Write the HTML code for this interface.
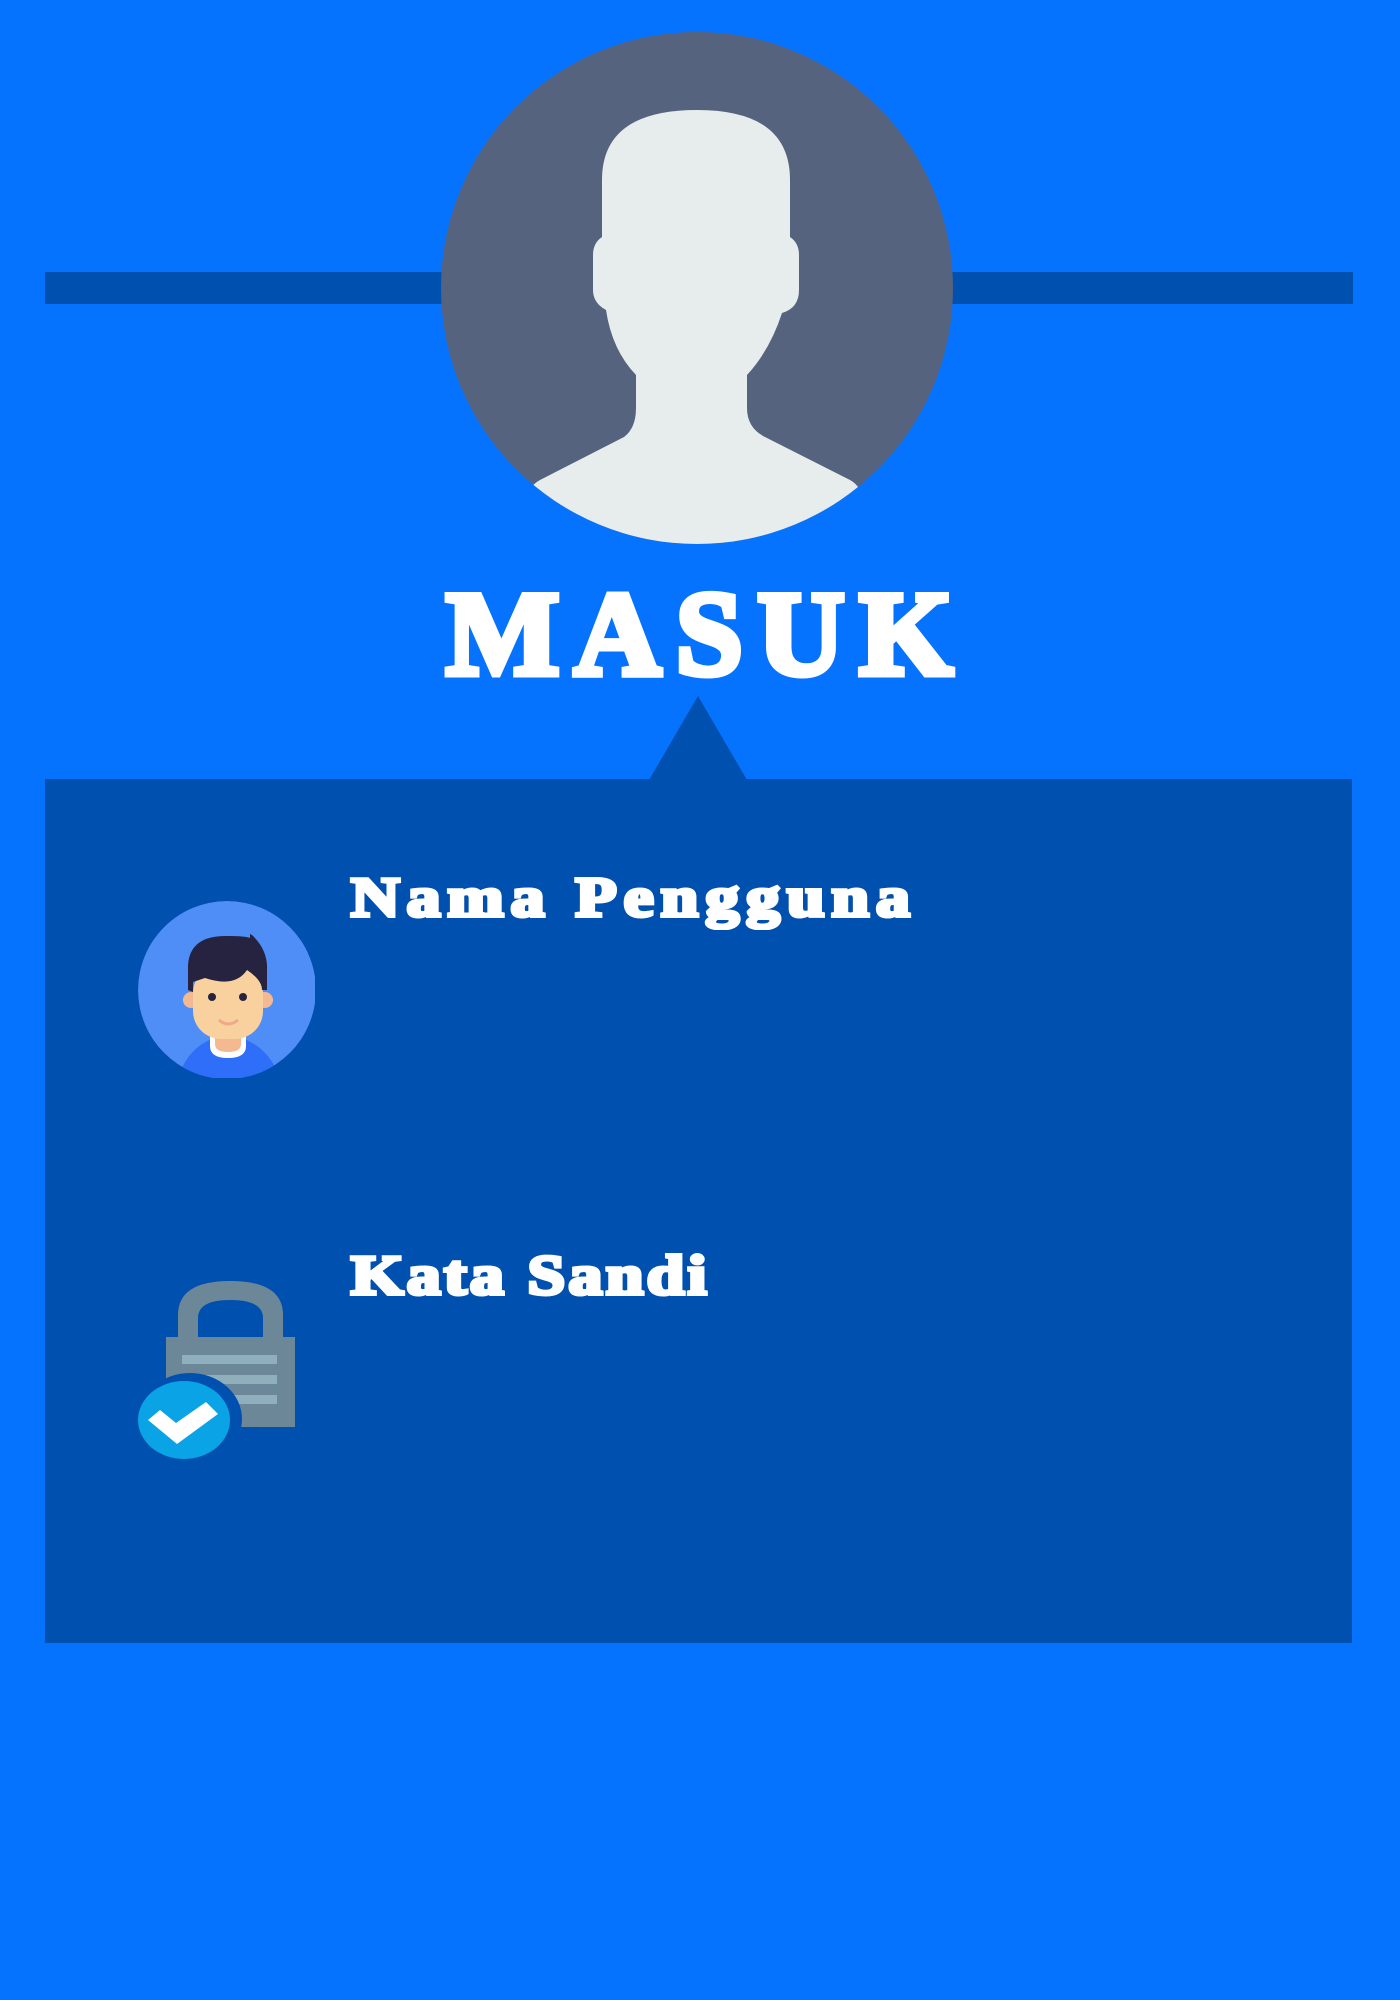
<!DOCTYPE html>
<html><head><meta charset="utf-8"><style>
html,body{margin:0;padding:0;}
body{width:1400px;height:2000px;background:#0573fe;position:relative;overflow:hidden;font-family:"Liberation Serif",serif;}
.t{position:absolute;color:#fff;font-weight:bold;white-space:nowrap;line-height:1;-webkit-text-stroke:4px #fff;transform-origin:0 0;}
</style></head><body>
<svg width="1400" height="2000" style="position:absolute;left:0;top:0">
<defs>
<clipPath id="c1"><circle cx="697" cy="288" r="256"/></clipPath>
<clipPath id="c2"><rect x="130" y="895" width="185" height="183"/></clipPath>
<clipPath id="c3"><circle cx="227" cy="990" r="89"/></clipPath>
</defs>
<rect x="45" y="272" width="1308" height="32" fill="#0050b0"/>
<circle cx="697" cy="288" r="256" fill="#56637f"/>
<g clip-path="url(#c1)">
<path d="M602,180 Q602,110 697,110 Q790,110 790,180 L790,237 Q799,243 799,255 L799,290 Q799,308 782,313 Q770,350 747,375 L747,408 Q747,428 765,437 L850,480 Q870,490 880,560 L500,560 Q520,490 540,480 L624,437 Q636,428 636,408 L636,375 Q612,350 606,310 Q593,303 593,290 L593,255 Q593,243 602,237 Z" fill="#e7ecec"/>
</g>
<polygon points="698,696 747,780 649,780" fill="#0050b0"/>
<rect x="45" y="779" width="1307" height="864" fill="#0050b0"/>
<g clip-path="url(#c2)">
<g clip-path="url(#c3)">
<circle cx="227" cy="990" r="89" fill="#4f8ef7"/>
<path d="M178,1078 Q190,1040 228,1035 Q266,1040 280,1078 Z" fill="#2f6ef8"/>
</g>
<path d="M210,1033 L246,1033 L246,1046 Q246,1058 228,1058 Q210,1058 210,1046 Z" fill="#fff"/>
<path d="M215,1033 L241,1033 L241,1044 Q241,1052 228,1052 Q215,1052 215,1044 Z" fill="#f4b990"/>
<circle cx="191" cy="1000" r="8" fill="#f4b990"/>
<circle cx="265" cy="1000" r="8" fill="#f4b990"/>
<rect x="193" y="965" width="70" height="74" rx="28" fill="#f9d19e"/>
<path d="M188,990 L188,965 Q190,935 228,936 Q245,936 250,938 L250,934 L252,935 Q268,950 267,970 L267,990 L262,990 Q262,980 247,970 Q235,988 205,978 L193,982 L193,992 Z" fill="#25233f"/>
<circle cx="212" cy="997" r="4" fill="#25233f"/>
<circle cx="243" cy="997" r="4" fill="#25233f"/>
<path d="M219,1020 Q228,1028 238,1020" stroke="#f0a88a" stroke-width="3" fill="none"/>
</g>
<path d="M178,1337 L178,1315 Q178,1281 230,1281 Q283,1281 283,1315 L283,1337 L263,1337 L263,1318 Q263,1300 230,1300 Q198,1300 198,1318 L198,1337 Z" fill="#6c8797"/>
<rect x="166" y="1337" width="129" height="90" fill="#6c8797"/>
<rect x="182" y="1355" width="95" height="9" fill="#8fafbd"/>
<rect x="182" y="1375" width="95" height="9" fill="#8fafbd"/>
<rect x="182" y="1395" width="95" height="9" fill="#8fafbd"/>
<ellipse cx="190" cy="1419" rx="52" ry="46" fill="#0050b0"/>
<ellipse cx="184" cy="1420" rx="46" ry="39" fill="#0aa3e6"/>
<path d="M148,1420 L160,1410 L176,1423 L206,1402 L218,1414 L177,1444 Z" fill="#fff"/>
</svg>
<div class="t" style="left:446px;top:574px;font-size:120px;letter-spacing:15px;-webkit-text-stroke:7px #fff;">MASUK</div>
<div class="t" style="left:351px;top:870px;font-size:56px;letter-spacing:6px;transform:scaleX(1.2);">Nama Pengguna</div>
<div class="t" style="left:351px;top:1248px;font-size:56px;letter-spacing:3px;transform:scaleX(1.2);">Kata Sandi</div>
</body></html>
